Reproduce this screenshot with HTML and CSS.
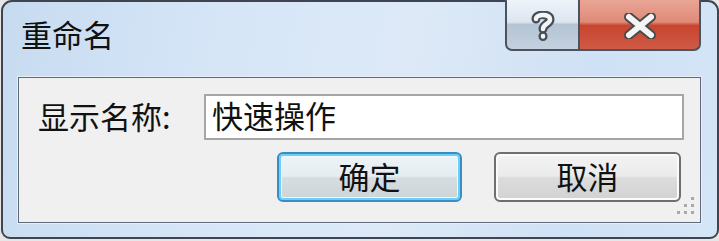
FILE: index.html
```html
<!DOCTYPE html>
<html lang="zh-CN">
<head>
<meta charset="utf-8">
<title>重命名</title>
<link rel="stylesheet" href="styles.css">
</head>
<body>
<div class="window">
  <div class="titlebar">
    <div class="title">重命名</div>
    <div class="caption">
      <div class="cbtn help">
        <svg width="24" height="30" viewBox="0 0 24 30">
          <g fill="none" stroke-linecap="round" stroke-linejoin="round">
            <path d="M5 8 C5 3 19 2 19 8.5 C19 13 12 13 12 18" stroke="#464d57" stroke-width="9"/>
            <path d="M12 25 L12 25.5" stroke="#464d57" stroke-width="9"/>
            <path d="M5 8 C5 3 19 2 19 8.5 C19 13 12 13 12 18" stroke="#f3f5f7" stroke-width="4.5"/>
            <path d="M12 25 L12 25.5" stroke="#f3f5f7" stroke-width="4.5"/>
          </g>
        </svg>
      </div>
      <div class="cbtn close">
        <svg width="40" height="26" viewBox="0 0 40 26">
          <path d="M9 4 L31 22 M31 4 L9 22" stroke="#4a4a4a" stroke-width="10" stroke-linecap="round" fill="none"/>
          <path d="M9 4 L31 22 M31 4 L9 22" stroke="#f4f4f4" stroke-width="6" stroke-linecap="round" fill="none"/>
        </svg>
      </div>
    </div>
  </div>
  <div class="client">
    <div class="row">
      <label class="label">显示名称:</label>
      <div class="input">快速操作</div>
    </div>
    <div class="buttons">
      <div class="btn default">确定</div>
      <div class="btn">取消</div>
    </div>
    <div class="grip">
      <svg width="20" height="20" viewBox="0 0 20 20">
        <g fill="#a9a9a9">
          <rect x="15" y="1" width="3" height="3"/>
          <rect x="15" y="8" width="3" height="3"/>
          <rect x="8" y="8" width="3" height="3"/>
          <rect x="15" y="15" width="3" height="3"/>
          <rect x="8" y="15" width="3" height="3"/>
          <rect x="1" y="15" width="3" height="3"/>
        </g>
      </svg>
    </div>
  </div>
</div>
</body>
</html>
```

FILE: styles.css
```css
html, body {
  margin: 0;
  padding: 0;
}
body {
  width: 719px;
  height: 241px;
  background: #e6e6e6;
  overflow: hidden;
  font-family: "Noto Sans CJK SC", "Noto Sans", sans-serif;
}
.window {
  box-sizing: border-box;
  width: 718px;
  height: 239px;
  margin-left: 1px;
  border: 2px solid #3e4550;
  border-radius: 11px 11px 9px 9px;
  background: linear-gradient(100deg, #c7dbf0 0%, #d6e6f7 30%, #dde9f7 55%, #cfe1f4 80%, #d4e5f6 100%);
  display: flex;
  flex-direction: column;
}
.titlebar {
  height: 75px;
  display: flex;
  justify-content: space-between;
  align-items: flex-start;
}
.title {
  margin: 14px 0 0 18px;
  font-size: 31px;
  line-height: 36px;
  color: #111;
}
.caption {
  display: flex;
  margin-right: 16px;
  margin-top: -2px;
}
.cbtn {
  box-sizing: border-box;
  height: 51px;
  border: 2px solid #4b5361;
  border-top: none;
  display: flex;
  align-items: center;
  justify-content: center;
}
.help {
  width: 74px;
  border-right: 1px solid #4b5361;
  border-radius: 0 0 0 7px;
  background: linear-gradient(180deg, #eef3f9 0%, #dde6f0 45%, #b5c4d4 50%, #c3d1df 100%);
}
.help svg {
  margin-top: 2px;
}
.close {
  width: 122px;
  border-left: 1px solid #4b5361;
  border-radius: 0 0 7px 0;
  background: linear-gradient(180deg, #e9a596 0%, #df8a78 45%, #c8452f 52%, #cf5a45 100%);
}
.close svg {
  margin-top: 2px;
}
.client {
  position: relative;
  box-sizing: border-box;
  margin: 0 16px 0 15px;
  height: 146px;
  border: 1px solid #5f6b7a;
  box-shadow: 0 0 0 1px #e6eef8;
  background: #f0f0f0;
  padding: 16px 16px 0 19px;
}
.row {
  display: flex;
  align-items: center;
  justify-content: space-between;
}
.label {
  font-size: 31px;
  color: #111;
  line-height: 36px;
  margin-top: -3px;
}
.input {
  box-sizing: border-box;
  width: 480px;
  height: 46px;
  border: 2px solid #a6a6a6;
  background: #fff;
  font-size: 31px;
  line-height: 38px;
  padding-left: 6px;
  color: #111;
}
.buttons {
  display: flex;
  justify-content: flex-end;
  gap: 32px;
  margin-top: 12px;
  padding-right: 3px;
}
.btn {
  box-sizing: border-box;
  width: 187px;
  height: 50px;
  border: 2px solid #6f6f6f;
  border-radius: 6px;
  box-shadow: inset 0 0 0 2px #fbfbfb;
  background: linear-gradient(180deg, #f3f3f3 0%, #ebebeb 48%, #dcdcdc 52%, #d2d2d2 100%);
  font-size: 31px;
  line-height: 44px;
  text-align: center;
  color: #111;
}
.btn.default {
  width: 185px;
  border-color: #3a8cc4;
  box-shadow: inset 0 0 0 2px #6ad0f4, inset 0 0 0 3px #f0f8fc;
  background: linear-gradient(180deg, #eef4f7 0%, #e5edf1 48%, #d5dde1 52%, #cdd5d9 100%);
}
.grip {
  position: absolute;
  right: 4px;
  bottom: 6px;
  width: 20px;
  height: 20px;
}
```
